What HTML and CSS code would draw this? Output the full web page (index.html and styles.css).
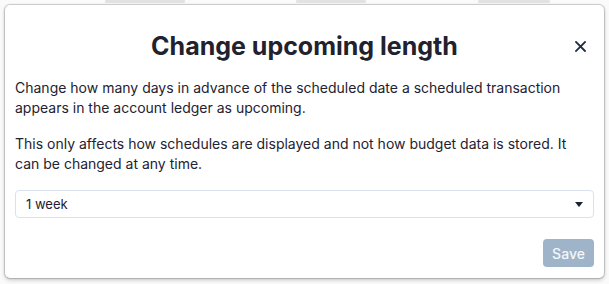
FILE: index.html
```html
<!DOCTYPE html>
<html>
<head>
<meta charset="utf-8">
<link rel="stylesheet" href="styles.css">
</head>
<body>
<div class="backdrop">
  <div class="behind">
    <span class="ghost g1"></span>
    <span class="ghost g2"></span>
    <span class="ghost g3"></span>
  </div>
  <div class="modal">
    <div class="header">
      <h1 class="title">Change upcoming length</h1>
      <button class="close" aria-label="Close">
        <svg width="11" height="11" viewBox="0 0 11 11"><path d="M1 1L10 10M10 1L1 10" stroke="#1f2f45" stroke-width="1.8" stroke-linecap="square"/></svg>
      </button>
    </div>
    <p class="text">Change how many days in advance of the scheduled date a scheduled transaction appears in the account ledger as upcoming.</p>
    <p class="text">This only affects how schedules are displayed and not how budget data is stored. It can be changed at any time.</p>
    <div class="select">
      <span>1 week</span>
      <svg width="8" height="5" viewBox="0 0 8 5"><path d="M0 0H8L4 5Z" fill="#1a2233"/></svg>
    </div>
    <div class="footer">
      <button class="save">Save</button>
    </div>
  </div>
</div>
</body>
</html>
```
FILE: styles.css
```css
html, body {
  margin: 0;
  padding: 0;
  background: #ffffff;
  font-family: Inter, "Noto Sans", sans-serif;
}
.backdrop {
  position: relative;
  width: 609px;
  height: 284px;
  padding: 5px 5px 0 5px;
  box-sizing: border-box;
  background: #fafafa;
}
.behind {
  position: absolute;
  top: 0;
  left: 0;
  width: 609px;
  height: 5px;
}
.ghost {
  position: absolute;
  top: 0;
  height: 3px;
  background: #e2e2e2;
  border-radius: 1px;
  filter: blur(0.6px);
}
.g1 { left: 105px; width: 80px; }
.g2 { left: 296px; width: 70px; }
.g3 { left: 478px; width: 72px; }
.modal {
  position: relative;
  width: 599px;
  height: 273px;
  background: #fff;
  border-radius: 5px;
  box-shadow: 0 0 1px 1px rgba(0,0,0,0.18), 0 2px 4px rgba(0,0,0,0.2);
  padding: 0 10px 0 10px;
  box-sizing: border-box;
  display: flex;
  flex-direction: column;
}
.header {
  height: 73px;
  display: flex;
  align-items: center;
  justify-content: center;
}
.title {
  margin: 0;
  font-size: 25px;
  font-weight: 700;
  color: #22212e;
  letter-spacing: 0;
  padding-top: 9px;
}
.close {
  position: absolute;
  right: 16px;
  top: 33px;
  width: 16px;
  height: 16px;
  border: 0;
  background: transparent;
  padding: 0;
  display: flex;
  align-items: center;
  justify-content: center;
}
.text {
  margin: 0 0 16px 0;
  font-size: 14px;
  line-height: 20px;
  color: #242231;
}
.select {
  margin-top: 0;
  height: 26px;
  border: 1px solid #d9e2ec;
  border-radius: 4px;
  display: flex;
  align-items: center;
  justify-content: space-between;
  padding: 0 10px 0 10px;
  font-size: 13px;
  color: #1a2233;
}
.footer {
  display: flex;
  justify-content: flex-end;
  margin-top: 21px;
}
.save {
  width: 51px;
  height: 28px;
  border: 0;
  border-radius: 4px;
  background: #9fb4c9;
  color: #f4f7fa;
  font-family: Inter, sans-serif;
  font-size: 14px;
  font-weight: 500;
  padding: 0;
}
```
